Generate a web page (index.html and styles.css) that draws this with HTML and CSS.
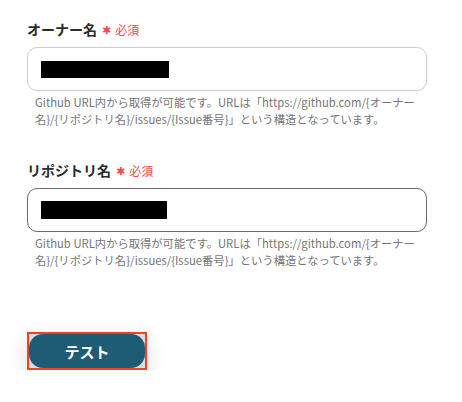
FILE: index.html
```html
<!DOCTYPE html>
<html lang="ja">
<head>
<meta charset="UTF-8" />
<meta name="viewport" content="width=device-width, initial-scale=1" />
<title>GitHub 設定</title>
<link rel="stylesheet" href="styles.css">
</head>
<body>
<main class="form">
  <div class="field">
    <label class="field-label">オーナー名<span class="req"><span class="star">✱</span>必須</span></label>
    <div class="input">
      <span class="redacted"></span>
    </div>
    <p class="help">Github URL内から取得が可能です。URLは「https://github.com/{オーナー名}/{リポジトリ名}/issues/{Issue番号}」という構造となっています。</p>
  </div>

  <div class="field">
    <label class="field-label">リポジトリ名<span class="req"><span class="star">✱</span>必須</span></label>
    <div class="input input-active">
      <span class="redacted tall"></span>
    </div>
    <p class="help">Github URL内から取得が可能です。URLは「https://github.com/{オーナー名}/{リポジトリ名}/issues/{Issue番号}」という構造となっています。</p>
  </div>

  <div class="actions">
    <div class="highlight">
      <button class="btn">テスト</button>
    </div>
  </div>
</main>
</body>
</html>
```

FILE: styles.css
```css
body {
  margin: 0;
  padding: 0;
  background: #fff;
  color: #333;
  font-family: "Noto Sans CJK JP", "Noto Sans", sans-serif;
}
.form {
  padding: 20px 35px 0 27px;
}
.field {
  margin-bottom: 33px;
}
.field-label {
  display: flex;
  align-items: center;
  height: 18px;
  font-size: 14px;
  font-weight: bold;
  color: #2b2b2b;
}
.req {
  display: inline-flex;
  align-items: center;
  margin-left: 5px;
  font-size: 12px;
  font-weight: normal;
  color: #ee4b4b;
}
.star {
  font-family: "DejaVu Sans", sans-serif;
  font-size: 11px;
  line-height: 1;
  margin-right: 4px;
  padding-top: 3px;
  color: #f04a4a;
}
.input {
  margin-top: 9px;
  height: 42px;
  border: 1px solid #c9cdd6;
  border-radius: 10px;
  display: flex;
  align-items: center;
  padding-left: 13px;
}
.input-active {
  border-color: #6a6a6a;
}
.redacted {
  display: block;
  width: 128px;
  height: 17px;
  background: #000;
}
.redacted.tall {
  width: 126px;
  height: 18px;
}
.help {
  margin: 3px 0 0 8px;
  font-size: 11.3px;
  line-height: 17px;
  color: #757575;
}
.actions {
  padding-top: 30px;
}
.highlight {
  display: inline-block;
  border: 2px solid #f0421e;
  background: #dcdcdc;
  box-shadow: 0 6px 20px rgba(0, 0, 0, 0.14);
}
.btn {
  display: block;
  width: 116px;
  height: 34px;
  border: none;
  border-radius: 14px;
  background: #1e5c76;
  color: #fff;
  font-family: inherit;
  font-size: 15px;
  font-weight: bold;
  cursor: pointer;
}
```
